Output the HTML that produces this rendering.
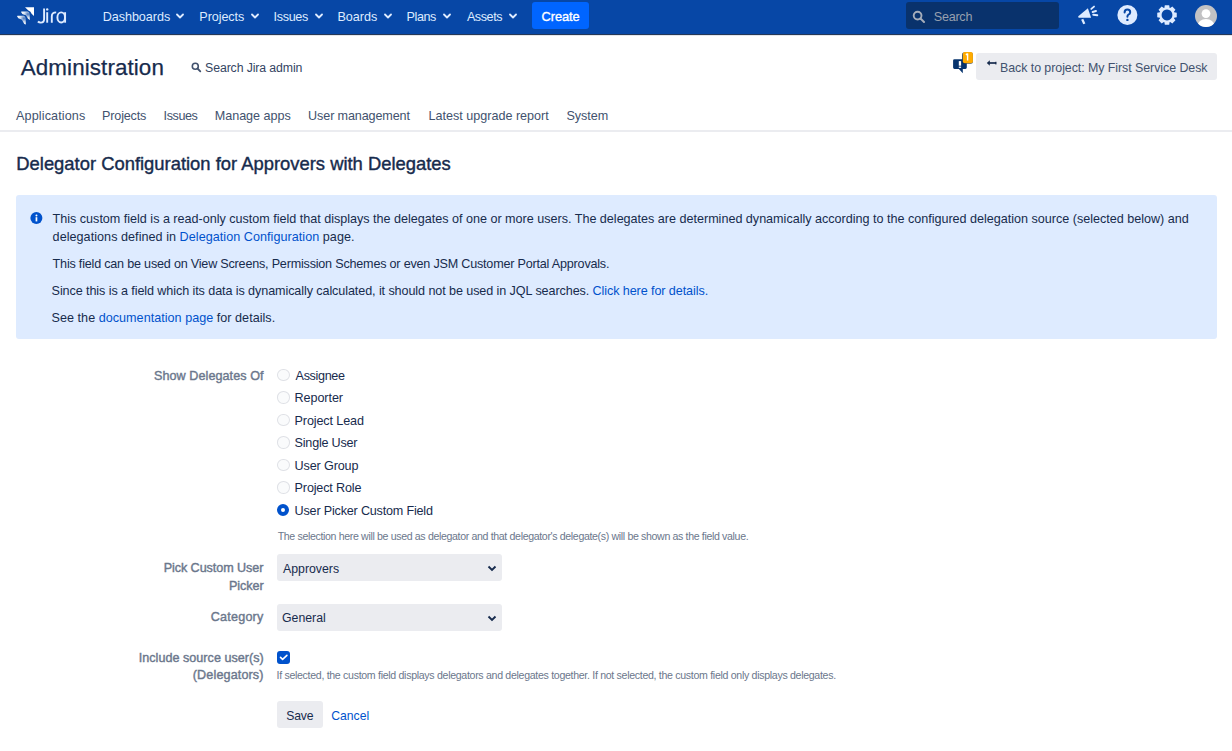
<!DOCTYPE html>
<html><head><meta charset="utf-8">
<style>
*{box-sizing:border-box}
html,body{margin:0;padding:0;width:1232px;height:751px;overflow:hidden;background:#fff}
body{font-family:"Liberation Sans",sans-serif;color:#172b4d;position:relative}
.t{position:absolute;white-space:nowrap;line-height:40px}
.b{position:absolute}
.lnk{color:#0052cc}
</style></head>
<body>
<div class="b" style="left:0;top:0;width:1232px;height:34px;background:#0747a6"></div>
<div class="b" style="left:0;top:34px;width:1232px;height:1px;background:#253858"></div>
<div class="b" style="left:0;top:35px;width:1232px;height:1px;background:#e4e6ea"></div>
<svg class="b" style="left:14px;top:4px" width="24" height="24" viewBox="0 0 24 24">
<defs><radialGradient id="lg" cx="0.78" cy="0.3" r="0.75"><stop offset="0" stop-color="#fff" stop-opacity="0.25"/><stop offset="0.55" stop-color="#fff" stop-opacity="0.85"/><stop offset="1" stop-color="#fff"/></radialGradient></defs>
<path d="M11 3.2H20V12L17.6 9.8Q16.9 7.2 14.4 6.5Z" fill="#fff"/>
<path d="M7.2 8.2Q6.8 7.6 7.6 7.6H13.6Q15.3 7.9 15.5 9.8L15.9 15.9Q13.6 15.2 12.9 12.8Q12.3 10.9 10.2 10.7Q8 10.4 7.2 8.2Z" fill="url(#lg)"/>
<path d="M3.2 12.4Q2.8 11.8 3.6 11.8H9.6Q11.3 12.1 11.5 14L11.9 20.6Q9.6 19.9 8.9 17.4Q8.3 15.3 6.2 15.1Q4 14.8 3.2 12.4Z" fill="url(#lg)"/>
</svg>
<svg class="b" style="left:36px;top:6px" width="32" height="20" viewBox="0 0 32 20" fill="none" stroke="#deebff" stroke-width="1.9">
<path d="M8.1 2.5V13Q8.1 16.6 4.8 16.6Q3 16.6 1.9 15.5"/>
<circle cx="11.2" cy="3.4" r="1.2" fill="#deebff" stroke="none"/><path d="M11.2 6.2V16.7"/>
<path d="M15.8 16.7V10.2Q15.8 6.4 20.2 6.4"/>
<ellipse cx="25.2" cy="11.45" rx="3.8" ry="5.05"/><path d="M29.1 6.2V16.7"/>
</svg>
<div class="t" style="left:102.70px;top:-3px;font-size:12.6px;color:#deebff;letter-spacing:-0.044px;">Dashboards</div>
<svg class="b" style="left:176.2px;top:12.5px" width="8" height="7" viewBox="0 0 8 7"><path d="M1 1.5L4 4.5L7 1.5" stroke="#deebff" stroke-width="1.8" fill="none" stroke-linecap="round" stroke-linejoin="round"/></svg>
<div class="t" style="left:199.30px;top:-3px;font-size:12.6px;color:#deebff;letter-spacing:-0.071px;">Projects</div>
<svg class="b" style="left:250.6px;top:12.5px" width="8" height="7" viewBox="0 0 8 7"><path d="M1 1.5L4 4.5L7 1.5" stroke="#deebff" stroke-width="1.8" fill="none" stroke-linecap="round" stroke-linejoin="round"/></svg>
<div class="t" style="left:273.60px;top:-3px;font-size:12.6px;color:#deebff;letter-spacing:-0.340px;">Issues</div>
<svg class="b" style="left:314.5px;top:12.5px" width="8" height="7" viewBox="0 0 8 7"><path d="M1 1.5L4 4.5L7 1.5" stroke="#deebff" stroke-width="1.8" fill="none" stroke-linecap="round" stroke-linejoin="round"/></svg>
<div class="t" style="left:337.40px;top:-3px;font-size:12.6px;color:#deebff;letter-spacing:-0.020px;">Boards</div>
<svg class="b" style="left:383.5px;top:12.5px" width="8" height="7" viewBox="0 0 8 7"><path d="M1 1.5L4 4.5L7 1.5" stroke="#deebff" stroke-width="1.8" fill="none" stroke-linecap="round" stroke-linejoin="round"/></svg>
<div class="t" style="left:406.60px;top:-3px;font-size:12.6px;color:#deebff;letter-spacing:-0.450px;">Plans</div>
<svg class="b" style="left:442.7px;top:12.5px" width="8" height="7" viewBox="0 0 8 7"><path d="M1 1.5L4 4.5L7 1.5" stroke="#deebff" stroke-width="1.8" fill="none" stroke-linecap="round" stroke-linejoin="round"/></svg>
<div class="t" style="left:466.90px;top:-3px;font-size:12.6px;color:#deebff;letter-spacing:-0.420px;">Assets</div>
<svg class="b" style="left:508.5px;top:12.5px" width="8" height="7" viewBox="0 0 8 7"><path d="M1 1.5L4 4.5L7 1.5" stroke="#deebff" stroke-width="1.8" fill="none" stroke-linecap="round" stroke-linejoin="round"/></svg>
<div class="b" style="left:532px;top:2px;width:57px;height:27px;background:#0065ff;border-radius:3px"></div>
<div class="t" style="left:541.60px;top:-3px;font-size:12.8px;color:#fff;letter-spacing:-0.100px;-webkit-text-stroke:0.35px #fff">Create</div>
<div class="b" style="left:906px;top:2px;width:153px;height:27px;background:#09326c;border-radius:3px"></div>
<svg class="b" style="left:912px;top:10px" width="14" height="13" viewBox="0 0 14 13"><circle cx="5.6" cy="5.6" r="3.9" stroke="#a5adba" stroke-width="1.9" fill="none"/><path d="M8.5 8.5L12 12" stroke="#a5adba" stroke-width="2" stroke-linecap="round"/></svg>
<div class="t" style="left:933.80px;top:-3px;font-size:12.6px;color:#97a0af;letter-spacing:-0.260px;">Search</div>
<svg class="b" style="left:1076px;top:4px" width="24" height="22" viewBox="0 0 24 22">
<path d="M2.3 12.3L11.9 4.2L15.1 13.7H3Q1.7 13.5 2.3 12.3z" fill="#deebff"/>
<path d="M6.2 15.2L8.3 19.9" stroke="#deebff" stroke-width="2.3" stroke-linecap="butt"/>
<path d="M15.3 4.9L18 2.6M16.6 8L20 7M17.2 10.7L21.3 11.3" stroke="#deebff" stroke-width="1.9" stroke-linecap="round"/>
</svg>
<svg class="b" style="left:1116px;top:4px" width="23" height="23" viewBox="0 0 23 23">
<circle cx="11.4" cy="11" r="10" fill="#deebff"/>
<path d="M8.6 8.6Q8.6 5.6 11.4 5.6Q14.2 5.6 14.2 8.2Q14.2 9.8 12.4 10.7Q11.4 11.2 11.4 12.8" stroke="#0747a6" stroke-width="2" fill="none" stroke-linecap="round"/>
<circle cx="11.4" cy="15.9" r="1.2" fill="#0747a6"/>
</svg>
<svg class="b" style="left:1155.8px;top:4px" width="22" height="22" viewBox="0 0 22 22">
<path d="M20.76 8.82 L20.76 13.18 L18.11 13.68 L17.92 14.14 L19.44 16.36 L16.36 19.44 L14.14 17.92 L13.68 18.11 L13.18 20.76 L8.82 20.76 L8.32 18.11 L7.86 17.92 L5.64 19.44 L2.56 16.36 L4.08 14.14 L3.89 13.68 L1.24 13.18 L1.24 8.82 L3.89 8.32 L4.08 7.86 L2.56 5.64 L5.64 2.56 L7.86 4.08 L8.32 3.89 L8.82 1.24 L13.18 1.24 L13.68 3.89 L14.14 4.08 L16.36 2.56 L19.44 5.64 L17.92 7.86 L18.11 8.32Z M11 5.6 A5.4 5.4 0 1 0 11.01 5.6Z" fill="#deebff" fill-rule="evenodd"/>
</svg>
<svg class="b" style="left:1195px;top:5px" width="22" height="22" viewBox="0 0 22 22">
<defs><clipPath id="av"><circle cx="11" cy="11" r="11"/></clipPath></defs>
<circle cx="11" cy="11" r="11" fill="#c2c2c4"/>
<g clip-path="url(#av)"><circle cx="11" cy="8.6" r="4.4" fill="#fff"/><ellipse cx="11" cy="21" rx="8.5" ry="7" fill="#fff"/></g>
</svg>
<div class="t" style="left:20.80px;top:48px;font-size:22.4px;color:#172b4d;letter-spacing:0.092px;-webkit-text-stroke:0.25px #172b4d">Administration</div>
<svg class="b" style="left:191px;top:62px" width="11" height="11" viewBox="0 0 11 11"><circle cx="4.3" cy="4.3" r="3" stroke="#42526e" stroke-width="1.6" fill="none"/><path d="M6.5 6.5L9.3 9.3" stroke="#42526e" stroke-width="1.8" stroke-linecap="round"/></svg>
<div class="t" style="left:205.10px;top:48px;font-size:12.3px;color:#344563;letter-spacing:-0.112px;">Search Jira admin</div>
<svg class="b" style="left:951px;top:50px" width="24" height="26" viewBox="0 0 24 26">
<path d="M3.4 9.2H14.4Q15.8 9.2 15.8 10.6V17.5Q15.8 18.9 14.4 18.9H11.8V23.3L7.9 18.9H3.5Q2.1 18.9 2.1 17.5V10.6Q2.1 9.2 3.4 9.2z" fill="#07346e"/>
<rect x="7.8" y="11.1" width="2.3" height="4.6" fill="#fff"/><rect x="7.8" y="16.6" width="2.3" height="1.3" fill="#fff"/>
<rect x="11" y="2.6" width="10.9" height="11.2" rx="2" fill="#0b2d5c" opacity="0.85"/>
<rect x="11.8" y="2" width="10.1" height="11.2" rx="2" fill="#ffab00"/>
<path d="M16.6 3.6V10.6M14.9 4.9L16.6 3.6" stroke="#fff" stroke-width="1.4"/>
</svg>
<div class="b" style="left:976px;top:53px;width:241px;height:27px;background:#ebecf0;border-radius:3px"></div>
<svg class="b" style="left:986px;top:59px" width="11" height="8" viewBox="0 0 11 8"><path d="M0.8 4L3.8 1.2V6.8z" fill="#172b4d"/><path d="M3 4H10" stroke="#172b4d" stroke-width="1.7"/><rect x="9.2" y="2.8" width="1.3" height="2.6" fill="#172b4d"/></svg>
<div class="t" style="left:1000.00px;top:48px;font-size:12.4px;color:#42526e;letter-spacing:-0.049px;">Back to project: My First Service Desk</div>
<div class="t" style="left:16.10px;top:96px;font-size:12.6px;color:#42526e;letter-spacing:0.109px;">Applications</div>
<div class="t" style="left:102.00px;top:96px;font-size:12.6px;color:#42526e;letter-spacing:-0.157px;">Projects</div>
<div class="t" style="left:163.60px;top:96px;font-size:12.6px;color:#42526e;letter-spacing:-0.420px;">Issues</div>
<div class="t" style="left:214.70px;top:96px;font-size:12.6px;color:#42526e;letter-spacing:-0.020px;">Manage apps</div>
<div class="t" style="left:308.10px;top:96px;font-size:12.6px;color:#42526e;letter-spacing:-0.121px;">User management</div>
<div class="t" style="left:428.40px;top:96px;font-size:12.6px;color:#42526e;">Latest upgrade report</div>
<div class="t" style="left:566.50px;top:96px;font-size:12.6px;color:#42526e;letter-spacing:-0.040px;">System</div>
<div class="b" style="left:0;top:130px;width:1232px;height:2px;background:#ebecf0"></div>
<div class="t" style="left:16.30px;top:144px;font-size:18.4px;color:#172b4d;-webkit-text-stroke:0.4px #172b4d">Delegator Configuration for Approvers with Delegates</div>
<div class="b" style="left:16px;top:195px;width:1201px;height:144px;background:#deebff;border-radius:3px"></div>
<svg class="b" style="left:30px;top:212px" width="13" height="13" viewBox="0 0 13 13"><circle cx="6.4" cy="6.1" r="6" fill="#0052cc"/><rect x="5.6" y="5.2" width="1.7" height="4.2" fill="#fff"/><circle cx="6.45" cy="3.4" r="1" fill="#fff"/></svg>
<div class="t" style="left:52.60px;top:199px;font-size:12.6px;color:#172b4d;letter-spacing:-0.013px;">This custom field is a read-only custom field that displays the delegates of one or more users. The delegates are determined dynamically according to the configured delegation source (selected below) and</div>
<div class="t" style="left:52.60px;top:217px;font-size:12.6px;color:#172b4d;letter-spacing:0.042px;">delegations defined in <span class="lnk">Delegation Configuration</span> page.</div>
<div class="t" style="left:52.60px;top:244px;font-size:12.6px;color:#172b4d;letter-spacing:-0.205px;">This field can be used on View Screens, Permission Schemes or even JSM Customer Portal Approvals.</div>
<div class="t" style="left:51.60px;top:271px;font-size:12.6px;color:#172b4d;letter-spacing:-0.092px;">Since this is a field which its data is dynamically calculated, it should not be used in JQL searches. <span class="lnk">Click here for details.</span></div>
<div class="t" style="left:51.60px;top:298px;font-size:12.6px;color:#172b4d;letter-spacing:0.024px;">See the <span class="lnk">documentation page</span> for details.</div>
<div class="t" style="left:154.00px;top:356px;font-size:12.6px;color:#6b778c;letter-spacing:0.062px;-webkit-text-stroke:0.4px #6b778c">Show Delegates Of</div>
<div class="b" style="left:277.1px;top:368.7px;width:12.6px;height:12.4px;border-radius:50%;background:#fafbfc;border:1.4px solid #dfe1e6"></div>
<div class="t" style="left:295.60px;top:356px;font-size:12.6px;color:#172b4d;letter-spacing:-0.343px;">Assignee</div>
<div class="b" style="left:277.1px;top:391.4px;width:12.6px;height:12.4px;border-radius:50%;background:#fafbfc;border:1.4px solid #dfe1e6"></div>
<div class="t" style="left:294.60px;top:378px;font-size:12.6px;color:#172b4d;letter-spacing:-0.086px;">Reporter</div>
<div class="b" style="left:277.1px;top:413.9px;width:12.6px;height:12.4px;border-radius:50%;background:#fafbfc;border:1.4px solid #dfe1e6"></div>
<div class="t" style="left:294.60px;top:401px;font-size:12.6px;color:#172b4d;letter-spacing:-0.127px;">Project Lead</div>
<div class="b" style="left:277.1px;top:436.3px;width:12.6px;height:12.4px;border-radius:50%;background:#fafbfc;border:1.4px solid #dfe1e6"></div>
<div class="t" style="left:294.60px;top:423px;font-size:12.6px;color:#172b4d;letter-spacing:-0.220px;">Single User</div>
<div class="b" style="left:277.1px;top:458.6px;width:12.6px;height:12.4px;border-radius:50%;background:#fafbfc;border:1.4px solid #dfe1e6"></div>
<div class="t" style="left:294.60px;top:446px;font-size:12.6px;color:#172b4d;letter-spacing:-0.133px;">User Group</div>
<div class="b" style="left:277.1px;top:481.4px;width:12.6px;height:12.4px;border-radius:50%;background:#fafbfc;border:1.4px solid #dfe1e6"></div>
<div class="t" style="left:294.60px;top:468px;font-size:12.6px;color:#172b4d;letter-spacing:-0.155px;">Project Role</div>
<div class="b" style="left:277.1px;top:503.8px;width:12.2px;height:12.2px;border-radius:50%;background:#fff;border:4.1px solid #0052cc"></div>
<div class="t" style="left:294.60px;top:491px;font-size:12.6px;color:#172b4d;letter-spacing:-0.191px;">User Picker Custom Field</div>
<div class="t" style="left:277.70px;top:516px;font-size:10.6px;color:#6b778c;letter-spacing:-0.352px;">The selection here will be used as delegator and that delegator's delegate(s) will be shown as the field value.</div>
<div class="t" style="left:163.70px;top:548px;font-size:12.6px;color:#6b778c;letter-spacing:-0.073px;-webkit-text-stroke:0.4px #6b778c">Pick Custom User</div>
<div class="t" style="left:229.00px;top:566px;font-size:12.6px;color:#6b778c;letter-spacing:-0.080px;-webkit-text-stroke:0.4px #6b778c">Picker</div>
<div class="b" style="left:277px;top:554px;width:225px;height:27px;background:#ebecf0;border-radius:3px"></div>
<div class="t" style="left:283.00px;top:549px;font-size:12.3px;color:#172b4d;">Approvers</div>
<svg class="b" style="left:487px;top:565px" width="10" height="7" viewBox="0 0 10 7"><path d="M1.5 1.5L5 5L8.5 1.5" stroke="#172b4d" stroke-width="1.9" fill="none"/></svg>
<div class="b" style="left:277px;top:604px;width:225px;height:27px;background:#ebecf0;border-radius:3px"></div>
<div class="t" style="left:282.00px;top:598px;font-size:12.3px;color:#172b4d;">General</div>
<svg class="b" style="left:487px;top:615px" width="10" height="7" viewBox="0 0 10 7"><path d="M1.5 1.5L5 5L8.5 1.5" stroke="#172b4d" stroke-width="1.9" fill="none"/></svg>
<div class="t" style="left:210.80px;top:597px;font-size:12.6px;color:#6b778c;letter-spacing:0.200px;-webkit-text-stroke:0.4px #6b778c">Category</div>
<div class="t" style="left:138.70px;top:638px;font-size:12.6px;color:#6b778c;letter-spacing:0.024px;-webkit-text-stroke:0.4px #6b778c">Include source user(s)</div>
<div class="t" style="left:192.80px;top:655px;font-size:12.6px;color:#6b778c;letter-spacing:0.127px;-webkit-text-stroke:0.4px #6b778c">(Delegators)</div>
<div class="b" style="left:277px;top:651px;width:13px;height:13px;background:#0052cc;border-radius:3px"></div>
<svg class="b" style="left:277px;top:651px" width="13" height="13" viewBox="0 0 13 13"><path d="M3.5 6.4L5.6 8.3L9.9 4.3" stroke="#fff" stroke-width="1.6" fill="none" stroke-linecap="round" stroke-linejoin="round"/></svg>
<div class="t" style="left:276.50px;top:655px;font-size:10.6px;color:#6b778c;letter-spacing:-0.309px;">If selected, the custom field displays delegators and delegates together. If not selected, the custom field only displays delegates.</div>
<div class="b" style="left:277px;top:701px;width:46px;height:27px;background:#ebecf0;border-radius:3px"></div>
<div class="t" style="left:286.30px;top:696px;font-size:12.2px;color:#172b4d;letter-spacing:-0.167px;">Save</div>
<div class="t" style="left:331.30px;top:696px;font-size:12.2px;color:#0052cc;letter-spacing:-0.020px;">Cancel</div>
</body></html>
